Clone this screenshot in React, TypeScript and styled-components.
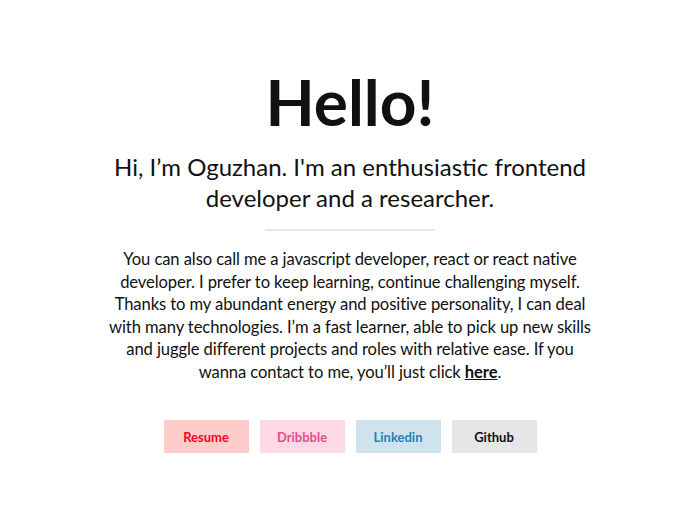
import React from "react";
import styled, { createGlobalStyle } from "styled-components";

const Global = createGlobalStyle`
  html, body { margin: 0; padding: 0; background: #fff; }
  body { font-family: "Lato", "Liberation Sans", sans-serif; color: #111; }
`;

const Page = styled.main`
  display: flex;
  flex-direction: column;
  align-items: center;
  padding-top: 62px;
  text-align: center;
`;

const Title = styled.h1`
  margin: 0;
  font-size: 64px;
  line-height: 80px;
  font-weight: 700;
  color: #111;
`;

const Subtitle = styled.h2`
  margin: 9px 0 0;
  font-size: 24px;
  line-height: 31px;
  font-weight: 400;
  max-width: 480px;
  color: #111;
`;

const Divider = styled.hr`
  width: 170px;
  height: 2px;
  border: 0;
  background: #e9e9e9;
  margin: 16px 0 0;
`;

const Paragraph = styled.p`
  margin: 17px 0 0;
  font-size: 16.6px;
  line-height: 22.5px;
  letter-spacing: -0.1px;
  max-width: 520px;
  color: #111;
`;

const Link = styled.a`
  color: #111;
  font-weight: 700;
  text-decoration: underline;
`;

const Buttons = styled.div`
  display: flex;
  gap: 11px;
  margin-top: 37px;
`;

const Button = styled.a<{ $bg: string; $fg: string }>`
  display: flex;
  align-items: center;
  justify-content: center;
  width: 85px;
  height: 33px;
  background: ${(p) => p.$bg};
  color: ${(p) => p.$fg};
  font-size: 13px;
  font-weight: 700;
  text-decoration: none;
`;

const buttons = [
  { label: "Resume", bg: "#ffcccc", fg: "#ff0022" },
  { label: "Dribbble", bg: "#fcd9e4", fg: "#ea4c89" },
  { label: "Linkedin", bg: "#cfe3ee", fg: "#2a7fb0" },
  { label: "Github", bg: "#e6e6e6", fg: "#111111" },
];

export default function App() {
  return (
    <>
      <Global />
      <Page>
        <Title>Hello!</Title>
        <Subtitle>Hi, I’m Oguzhan. I'm an enthusiastic frontend developer and a researcher.</Subtitle>
        <Divider />
        <Paragraph>
          You can also call me a javascript developer, react or react native
          <br />
          developer. I prefer to keep learning, continue challenging myself.
          <br />
          Thanks to my abundant energy and positive personality, I can deal
          <br />
          with many technologies. I’m a fast learner, able to pick up new skills
          <br />
          and juggle different projects and roles with relative ease. If you
          <br />
          wanna contact to me, you’ll just click <Link href="#">here</Link>.
        </Paragraph>
        <Buttons>
          {buttons.map((b) => (
            <Button key={b.label} href="#" $bg={b.bg} $fg={b.fg}>
              {b.label}
            </Button>
          ))}
        </Buttons>
      </Page>
    </>
  );
}
